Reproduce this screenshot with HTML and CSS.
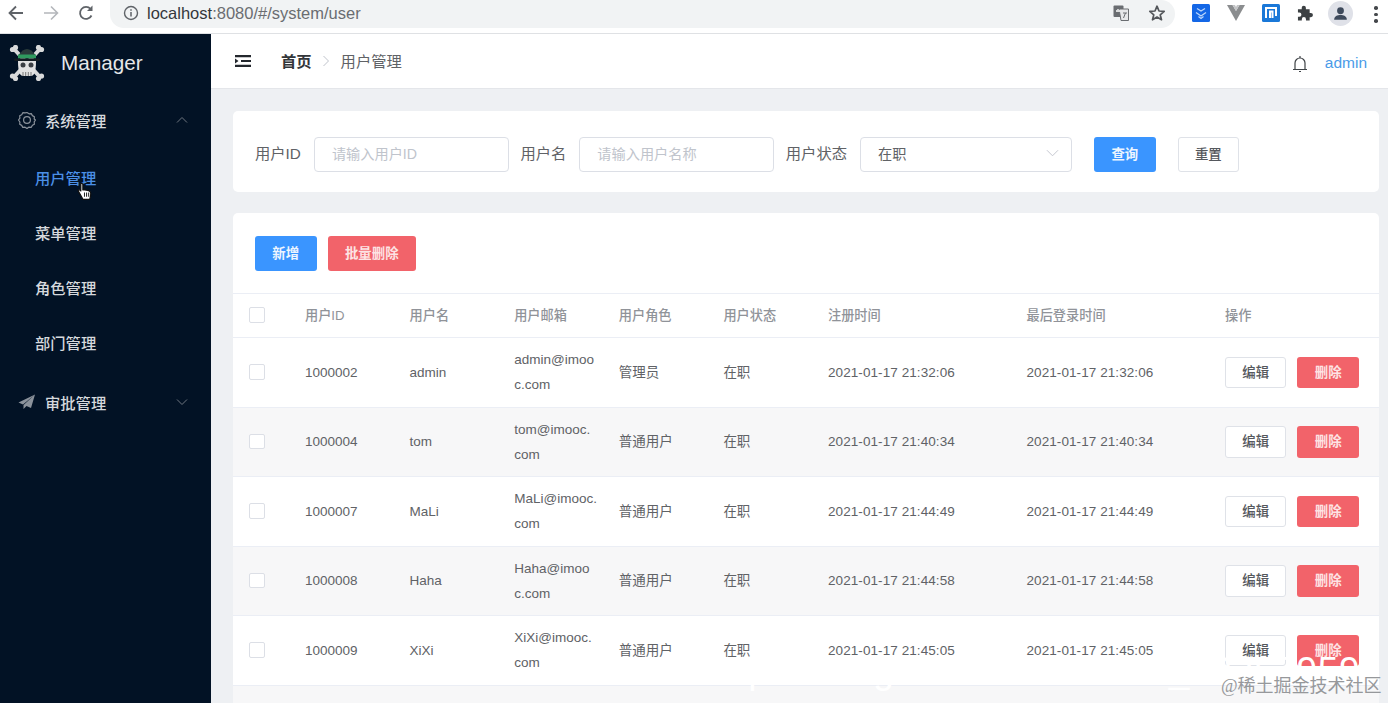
FILE: index.html
```html
<!DOCTYPE html>
<html lang="zh-CN">
<head>
<meta charset="utf-8">
<title>用户管理</title>
<link rel="stylesheet" href="styles.css">
</head>
<body>
<header class="chrome">
  <svg class="ci back" viewBox="0 0 18 18"><path d="M16 9H3M9 2.500 2.500 9 9 15.500" fill="none" stroke="#5f6368" stroke-width="1.800"/></svg>
  <svg class="ci fwd" viewBox="0 0 18 18"><path d="M2 9h13M9 2.500 15.500 9 9 15.500" fill="none" stroke="#b4b7bb" stroke-width="1.600"/></svg>
  <svg class="ci reload" viewBox="0 0 18 18"><path d="M14.500 11.500A6 6 0 1 1 13.600 5" fill="none" stroke="#5f6368" stroke-width="1.800"/><path d="M15.500 1.500v5.500H10z" fill="#5f6368"/></svg>
  <div class="omni">
    <svg class="info" viewBox="0 0 16 16"><circle cx="8" cy="8" r="6.500" fill="none" stroke="#5f6368" stroke-width="1.400"/><path d="M8 7v4.500M8 4.300v1.500" stroke="#5f6368" stroke-width="1.500"/></svg>
    <span class="url"><b>localhost</b>:8080/#/system/user</span>
    <svg class="translate" viewBox="0 0 16 16"><rect x="0.500" y="0.500" width="10" height="11.500" rx="1" fill="#6a6d71"/><path d="M6 4h9.500v11.500H8z" fill="#e6e7e9" stroke="#6a6d71"/><path d="M3 6h4M5 4v1" stroke="#fff" stroke-width="1.300"/><path d="M10 8h4M12.500 8 10.500 13" stroke="#6a6d71" stroke-width="1"/></svg>
    <svg class="star" viewBox="0 0 18 18"><path d="M9 2.200 11 7l5.200.4-4 3.400 1.300 5L9 13.100 4.500 15.800l1.300-5-4-3.400L7 7z" fill="none" stroke="#53565a" stroke-width="1.700" stroke-linejoin="round"/></svg>
  </div>
  <svg class="ext e1" viewBox="0 0 18 18"><rect width="18" height="18" rx="1.500" fill="#1467e6"/><path d="M5 4.500 9 7l4-2.500M4 8.500 9 12l5-3.500M6.500 12.500 9 14.500l2.500-2" fill="none" stroke="#bcd6fa" stroke-width="1.300"/></svg>
  <svg class="ext e2" viewBox="0 0 18 18"><path d="M0 1h5.500L9 7l3.500-6H18L9 17z" fill="#8b8d8f"/><path d="M5.500 1H8l1 2 1-2h2.500L9 7z" fill="#c3c4c6"/></svg>
  <svg class="ext e3" viewBox="0 0 18 18"><rect width="18" height="18" rx="1.500" fill="#1a78d8"/><path d="M4 14V4h10v8M8 14V7.500h2.500V14" fill="none" stroke="#fff" stroke-width="2"/></svg>
  <svg class="ext e4" viewBox="0 0 18 18"><path d="M1 5h4V3.500a2.200 2.200 0 0 1 4.400 0V5h4v4h1.300a2.200 2.200 0 0 1 0 4.400h-1.300V17H9.500v-1.500a2.200 2.200 0 0 0-4.400 0V17H1v-4h1.500a2.200 2.200 0 0 0 0-4.400H1z" fill="#3c4043"/></svg>
  <div class="avatar"><svg viewBox="0 0 24 24"><circle cx="12" cy="8.500" r="4.300" fill="#3e4a5c"/><path d="M4 20c0-4.500 4-6 8-6s8 1.500 8 6z" fill="#3e4a5c"/></svg></div>
  <div class="dots"><i></i><i></i><i></i></div>
</header>

<div class="app">
  <aside class="side">
    <div class="logo">
      <svg class="skull" viewBox="0 0 36 36">
        <path d="M5 4 31 32M31 4 5 32" stroke="#d8d9da" stroke-width="4" stroke-linecap="round"/>
        <circle cx="3.500" cy="4.500" r="2.600" fill="#d8d9da"/><circle cx="6.500" cy="2.500" r="2.600" fill="#d8d9da"/>
        <circle cx="32.500" cy="4.500" r="2.600" fill="#d8d9da"/><circle cx="29.500" cy="2.500" r="2.600" fill="#d8d9da"/>
        <circle cx="3.500" cy="31" r="2.600" fill="#d8d9da"/><circle cx="6.500" cy="33.500" r="2.600" fill="#d8d9da"/>
        <circle cx="32.500" cy="31" r="2.600" fill="#d8d9da"/><circle cx="29.500" cy="33.500" r="2.600" fill="#d8d9da"/>
        <path d="M9 16q0 15 5 15h8q5 0 5-15z" fill="#e2e2e2"/>
        <path d="M9.500 10q8.500-12 17 0v3h-17z" fill="#2a3b3a"/>
        <rect x="9" y="9.500" width="18" height="4" fill="#2f9a5e"/>
        <rect x="5" y="13.500" width="26" height="2.500" rx="1.200" fill="#141c22"/>
        <circle cx="14" cy="20" r="2.500" fill="#3b3f44"/><circle cx="22" cy="20" r="2.500" fill="#3b3f44"/>
        <path d="M14 27v4M16.700 27v4M19.300 27v4M22 27v4" stroke="#777" stroke-width="1"/>
      </svg>
      <span class="brand">Manager</span>
    </div>
    <nav class="menu">
      <div class="menu-head">
        <svg class="m-ico" viewBox="0 0 18 18"><path d="M9 1.500 11 2.800l2.300-.2 1.100 2 2 1.100-.2 2.300L17.500 9l-1.300 1.900.2 2.300-2 1.100-1.100 2-2.300-.2L9 17.500l-1.900-1.300-2.300.2-1.100-2-2-1.100.2-2.300L.5 9l1.400-1.900-.2-2.300 2-1.100 1.100-2 2.300.2z" fill="none" stroke="#8b929b" stroke-width="1.200" stroke-linejoin="round"/><circle cx="9" cy="9" r="3.400" fill="none" stroke="#8b929b" stroke-width="1.200"/></svg>
        <span>系统管理</span>
        <svg class="m-arrow" viewBox="0 0 12 8"><path d="M1 6.500 6 1.500l5 5" fill="none" stroke="#6f7680" stroke-width="1"/></svg>
      </div>
      <ul class="sub">
        <li class="active">用户管理</li>
        <li>菜单管理</li>
        <li>角色管理</li>
        <li>部门管理</li>
      </ul>
      <div class="menu-head">
        <svg class="m-ico" viewBox="0 0 18 18"><path d="M17 1.500 0.500 9.500l4.500 2zM17 1.500 5.500 12v4l3-3 4.500 2z" fill="#8b929b"/></svg>
        <span>审批管理</span>
        <svg class="m-arrow" viewBox="0 0 12 8"><path d="M1 1.500 6 6.500l5-5" fill="none" stroke="#6f7680" stroke-width="1"/></svg>
      </div>
    </nav>
  </aside>

  <main class="main">
    <div class="nav">
      <svg class="fold" viewBox="0 0 16 12"><path d="M0 1.200h16M6 6h10M0 10.800h16" stroke="#23272d" stroke-width="2.200"/><path d="M0 3.500 3.500 6 0 8.500z" fill="#23272d"/></svg>
      <span class="crumb-home">首页</span>
      <svg class="crumb-sep" viewBox="0 0 8 12"><path d="M1.500 1 6.500 6l-5 5" fill="none" stroke="#c0c4cc" stroke-width="1"/></svg>
      <span class="crumb-page">用户管理</span>
      <svg class="bell" viewBox="0 0 16 18"><path d="M1 14.500h14M3 14.500V8a5 5 0 0 1 10 0v6.500M7 16.500h2" fill="none" stroke="#3f4347" stroke-width="1.200"/><path d="M8 1v2" stroke="#3f4347" stroke-width="1.200"/></svg>
      <span class="user">admin</span>
    </div>

    <div class="content">
      <form class="card query">
        <label class="q-label">用户ID</label>
        <div class="field f-in">请输入用户ID</div>
        <label class="q-label">用户名</label>
        <div class="field f-in">请输入用户名称</div>
        <label class="q-label">用户状态</label>
        <div class="field f-sel"><span>在职</span><svg viewBox="0 0 14 8"><path d="M1 1l6 6 6-6" fill="none" stroke="#c0c4cc" stroke-width="1"/></svg></div>
        <button type="button" class="btn primary q-first">查询</button>
        <button type="button" class="btn plain q-second">重置</button>
      </form>

      <section class="card list">
        <div class="actions">
          <button type="button" class="btn primary">新增</button>
          <button type="button" class="btn danger wide">批量删除</button>
        </div>
        <table class="grid">
          <colgroup>
            <col class="c0"><col class="c1"><col class="c1"><col class="c1"><col class="c1"><col class="c1"><col class="c2"><col class="c2"><col>
          </colgroup>
          <thead>
            <tr><th><i class="check"></i></th><th>用户ID</th><th>用户名</th><th>用户邮箱</th><th>用户角色</th><th>用户状态</th><th>注册时间</th><th>最后登录时间</th><th>操作</th></tr>
          </thead>
          <tbody>
            <tr><td><i class="check"></i></td><td>1000002</td><td>admin</td><td>admin@imoo<br>c.com</td><td>管理员</td><td>在职</td><td class="time">2021-01-17 21:32:06</td><td class="time">2021-01-17 21:32:06</td><td><div class="ops"><button type="button" class="btn plain">编辑</button><button type="button" class="btn danger">删除</button></div></td></tr>
            <tr><td><i class="check"></i></td><td>1000004</td><td>tom</td><td>tom@imooc.<br>com</td><td>普通用户</td><td>在职</td><td class="time">2021-01-17 21:40:34</td><td class="time">2021-01-17 21:40:34</td><td><div class="ops"><button type="button" class="btn plain">编辑</button><button type="button" class="btn danger">删除</button></div></td></tr>
            <tr><td><i class="check"></i></td><td>1000007</td><td>MaLi</td><td>MaLi@imooc.<br>com</td><td>普通用户</td><td>在职</td><td class="time">2021-01-17 21:44:49</td><td class="time">2021-01-17 21:44:49</td><td><div class="ops"><button type="button" class="btn plain">编辑</button><button type="button" class="btn danger">删除</button></div></td></tr>
            <tr><td><i class="check"></i></td><td>1000008</td><td>Haha</td><td>Haha@imoo<br>c.com</td><td>普通用户</td><td>在职</td><td class="time">2021-01-17 21:44:58</td><td class="time">2021-01-17 21:44:58</td><td><div class="ops"><button type="button" class="btn plain">编辑</button><button type="button" class="btn danger">删除</button></div></td></tr>
            <tr><td><i class="check"></i></td><td>1000009</td><td>XiXi</td><td>XiXi@imooc.<br>com</td><td>普通用户</td><td>在职</td><td class="time">2021-01-17 21:45:05</td><td class="time">2021-01-17 21:45:05</td><td><div class="ops"><button type="button" class="btn plain">编辑</button><button type="button" class="btn danger">删除</button></div></td></tr>
            <tr><td><i class="check"></i></td><td>1000010</td><td>Tim</td><td>Tim@imooc.<br>com</td><td>普通用户</td><td>在职</td><td class="time">2021-01-17 21:45:12</td><td class="time">2021-01-17 21:45:12</td><td><div class="ops"><button type="button" class="btn plain">编辑</button><button type="button" class="btn danger">删除</button></div></td></tr>
          </tbody>
        </table>
      </section>
    </div>
  </main>
</div>

<svg class="cursor" viewBox="0 0 15 19"><path d="M3.500 1.500c1-.6 2 0 2 1v5l1-.3 1 .3 1 .2 1.500.3 1.500.5c1 .5 1.500 1 1.500 2.500 0 2-.5 3.500-1 5.500H5.500L2.500 11 1 8.500c0-1 1-1.300 1.800-.8l.7.800z" fill="#fff" stroke="#111" stroke-width="1.200" stroke-linejoin="round"/><path d="M7 10v4M9 10v4M11 10v4" stroke="#111" stroke-width=".9"/></svg>
<div class="mark-csdn">https://blog.csdn.net/weixin_43352959</div>
<div class="mark-juejin">@稀土掘金技术社区</div>
</body>
</html>
```
FILE: styles.css
```css
* { box-sizing: border-box; }
html, body { margin: 0; height: 703px; overflow: hidden; }
body {
  position: relative;
  font-family: "Liberation Sans", "Noto Sans CJK SC", sans-serif;
  color: #606266;
  background: #eef0f3;
}

/* browser toolbar */
.chrome {
  height: 34px;
  display: flex;
  align-items: flex-start;
  background: #fff;
  border-bottom: 1px solid #dfe1e4;
}
.ci { width: 18px; height: 18px; margin-top: 4px; flex: none; }
.back { margin-left: 7px; }
.fwd { margin-left: 17px; }
.reload { margin-left: 17px; }
.omni {
  width: 1065px;
  height: 28px;
  margin-left: 15px;
  padding: 0 9px 2px 13px;
  background: #f1f3f4;
  border-radius: 0 14px 14px 14px;
  display: flex;
  align-items: center;
  flex: none;
}
.info { width: 16px; height: 16px; flex: none; }
.url { margin-left: 8px; font-size: 16.500px; color: #6a6d71; }
.url b { font-weight: 400; color: #34373b; }
.translate { width: 16px; height: 16px; margin-left: auto; }
.star { width: 18px; height: 18px; margin-left: 19px; }
.ext { width: 18px; height: 18px; margin-top: 4px; flex: none; }
.e1 { margin-left: 17px; }
.e2 { margin-left: 17px; }
.e3 { margin-left: 17px; }
.e4 { margin-left: 17px; width: 17px; }
.avatar {
  width: 25px;
  height: 25px;
  margin: 1px 0 0 14px;
  border-radius: 50%;
  background: #dfe1e8;
  padding: 3px;
  flex: none;
}
.avatar svg { display: block; }
.dots { margin: 6px 0 0 21px; display: flex; flex-direction: column; gap: 3px; }
.dots i { width: 3.500px; height: 3.500px; border-radius: 50%; background: #44474b; }

/* shell */
.app { display: flex; height: 669px; }
.side { width: 211px; flex: none; background: #021225; color: #d6d9dd; }
.logo { height: 60px; display: flex; align-items: center; padding: 0 0 2px 9px; }
.skull { width: 36px; height: 36px; flex: none; }
.brand { margin-left: 16px; font-size: 20.700px; color: #e6e7e9; }
.menu { font-size: 15.300px; font-weight: 500; }
.menu-head { height: 55px; display: flex; align-items: center; padding: 0 23px 3px 18px; }
.menu-head span { margin-left: 9px; }
.m-ico { width: 18px; height: 18px; flex: none; }
.m-arrow { width: 12px; height: 8px; margin-left: auto; }
.sub { list-style: none; margin: 0; padding: 2px 0 5px; }
.sub li { height: 55px; line-height: 55px; padding-left: 35px; }
.sub li.active { color: #4b8fe6; }

.main { flex: 1; min-width: 0; }
.nav {
  height: 55px;
  background: #fff;
  border-bottom: 1px solid #e4e6ea;
  display: flex;
  align-items: center;
  padding: 0 20px 0 24px;
}
.fold { width: 16px; height: 12px; margin-top: -1px; flex: none; }
.crumb-home { margin: -2px 0 0 30px; font-size: 15.300px; font-weight: 700; color: #33363a; }
.crumb-sep { width: 8px; height: 12px; margin-left: 10px; flex: none; }
.crumb-page { margin: -2px 0 0 11px; font-size: 15.300px; color: #606266; }
.bell { width: 16px; height: 18px; margin-left: auto; margin-top: 5px; }
.user { margin: 4px 1px 0 17px; font-size: 15.500px; color: #4a9be8; }

.content { padding: 22px 9px 0 22px; }
.card { background: #fff; border-radius: 5px; }
.query {
  height: 81px;
  margin-bottom: 21px;
  padding: 5px 22px 0;
  display: flex;
  align-items: center;
  font-size: 15.300px;
}
.q-label { margin: 0 13px 4px 0; color: #606266; }
.field {
  height: 35px;
  border: 1px solid #dcdfe6;
  border-radius: 4px;
  display: flex;
  align-items: center;
  padding: 0 17px 2px;
  font-size: 14.200px;
}
.f-in { width: 195px; margin-right: 11.500px; color: #c0c4cc; }
.f-sel { width: 212px; color: #606266; justify-content: space-between; padding-right: 12px; }
.f-sel svg { width: 13px; height: 8px; }
.q-first { margin-left: 22px; }
.q-second { margin-left: 22px; }

.btn {
  width: 61.500px;
  height: 35px;
  padding: 0 0 3px;
  border: 1px solid transparent;
  border-radius: 3px;
  font: 500 13.400px "Liberation Sans", "Noto Sans CJK SC", sans-serif;
}
.primary { background: #3a95ff; color: #eef5ff; font-weight: 700; }
.danger { background: #f2636a; color: #fde3e4; font-weight: 700; }
.plain { background: #fff; border-color: #dfe2e8; color: #55585d; }
.wide { width: 88.500px; margin-left: 11px; }

.list { height: 640px; overflow: hidden; border-radius: 5px 5px 0 0; }
.actions { height: 80px; padding: 23px 22px 0; display: flex; align-items: flex-start; }
.grid {
  width: 100%;
  table-layout: fixed;
  border-collapse: separate;
  border-spacing: 0;
  font-size: 13.500px;
  border-top: 1px solid #ebeef5;
}
.c0 { width: 62px; }
.c1 { width: 104.600px; }
.c2 { width: 198.500px; }
.grid th, .grid td {
  padding: 0 10px;
  text-align: left;
  vertical-align: middle;
  border-bottom: 1px solid #ebeef5;
  line-height: 25px;
}
.grid th { height: 44px; font-size: 13.200px; font-weight: 500; color: #909399; }
.grid td { height: 69.500px; color: #606266; }
.grid td.time { letter-spacing: .08px; }
.grid tbody tr:nth-child(even) td { background: #f7f7f8; }
.grid th:first-child, .grid td:first-child { padding: 0 0 0 16px; }
.grid td:last-child, .grid th:last-child { padding-right: 0; }
.check {
  display: block;
  width: 15.500px;
  height: 15.500px;
  margin-top: -1px;
  background: #fff;
  border: 1px solid #dcdfe6;
  border-radius: 2px;
}
.ops { display: flex; gap: 11px; }
.ops .btn { height: 31.500px; }

/* overlays */
.cursor { position: absolute; left: 77px; top: 182px; width: 16px; height: 20px; }
.mark-csdn {
  position: absolute;
  left: 705px;
  top: 647px;
  font-size: 37px;
  line-height: 48px;
  color: #fff;
  white-space: nowrap;
  letter-spacing: .7px;
}
.mark-juejin {
  position: absolute;
  left: 1221px;
  top: 675px;
  font: 18px/22px "Liberation Serif", "Noto Sans CJK SC", serif;
  color: #96989b;
  white-space: nowrap;
}
```
